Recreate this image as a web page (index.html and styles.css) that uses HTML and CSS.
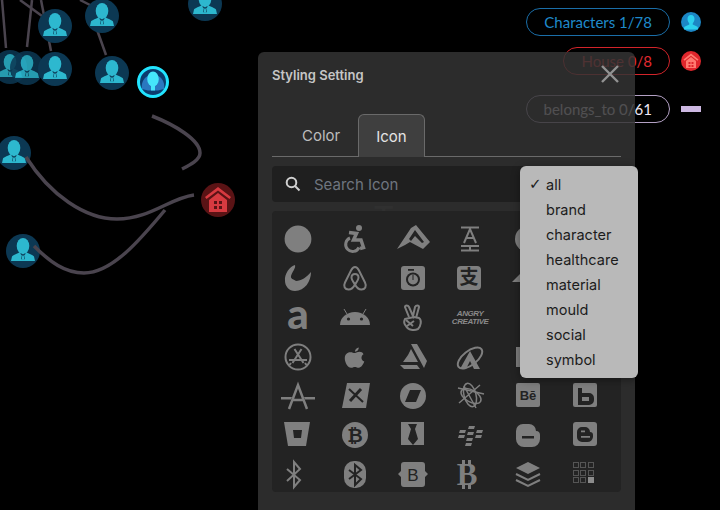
FILE: index.html
```html
<!DOCTYPE html>
<html lang="en">
<head>
  <meta charset="UTF-8">
  <title>Styling Setting</title>
  <link rel="stylesheet" href="styles.css">
</head>
<body>

  <!-- graph canvas -->
  <svg class="graph" width="720" height="510" viewBox="0 0 720 510">
    <defs>
      <g id="person">
        <circle r="17" class="node-bg"/>
        <ellipse cy="-5" rx="6.300" ry="8" class="node-fg"/>
        <path class="node-fg" d="M-12 10l1-4.500c.5-1.200 6-3 8-4.500h6c2 1.500 7.500 3.300 8 4.500l1 4.500z"/>
        <path class="node-bg-line" d="M-3 2.500l1.800 1.800-.6 4h3.600l-.6-4L3 2.500h-1.500L0 3.500-1.500 2.500z"/>
        <path class="node-fg" d="M-.8 4.500h1.600l.4 4h-2.400z"/>
      </g>
    </defs>

    <g class="edge-thin">
      <path d="M2 0L6 48"/>
      <path d="M32 0L27 47"/>
      <path d="M41 0L51 51"/>
      <path d="M20 0L42 16"/>
      <path d="M80 0L92 6"/>
      <path d="M90 10L106 55"/>
    </g>

    <use href="#person" x="55" y="26"/>
    <use href="#person" x="102" y="16"/>
    <use href="#person" x="205" y="4"/>
    <use href="#person" x="10" y="67" class="faded"/>
    <use href="#person" x="27" y="68" class="faded"/>
    <use href="#person" x="55" y="69"/>
    <use href="#person" x="112" y="73"/>
    <use href="#person" x="14" y="153"/>
    <use href="#person" x="23" y="251"/>

    <g transform="translate(153 82)">
      <circle r="14.500" class="hl-bg"/>
      <path class="hl-wing" d="M-11 7c-1-5 1-10 5-12.500L0 -8l6 2.500c4 2.500 6 7.500 5 12.500l-6 1.500H-5z"/>
      <ellipse cy="-3" rx="5.800" ry="7.500" class="hl-face"/>
      <path class="hl-face" d="M-2 3h4v5.500h-4z"/>
    </g>

    <g class="edge">
      <path d="M152 116C175 125 200 140 200 153C200 160 190 165 182 169"/>
      <path d="M26 157C50 195 85 219 117 219C150 219 170 198 194 195"/>
      <path d="M34 246C50 262 65 273 84 273C112 273 140 240 165 210"/>
    </g>

    <g transform="translate(218 200)">
      <circle r="17" class="house-bg"/>
      <path class="house-fg" d="M0 -13L-13 -3l1.500 2L0 -9.500 11.500 -1l1.500 -2zM-9 0v12H9V0L0 -7zM-4 1h3v3h-3zM1 1h3v3H1zM-4 6h3v3h-3zM1 6h3v3H1z" fill-rule="evenodd"/>
    </g>

    <text x="411" y="230" class="ghost-label">Tony</text>
  </svg>

  <!-- legend, top right -->
  <ul class="legend">
    <li class="legend-row">
      <span class="pill pill-blue">Characters 1/78</span>
      <svg class="legend-icon" width="20" height="20" viewBox="-10 -10 20 20">
        <circle r="10" fill="#1c86c4"/>
        <path fill="#2bd0ee" d="M0 -7c-2.500 0-3.500 2-3.500 4 0 1.800 1 3.300 1.800 4.500v1l-4.300 2c-.7.300-1 1.200-1 2v1h14v-1c0-.8-.3-1.700-1-2l-4.300-2v-1c.8-1.200 1.800-2.700 1.800-4.500 0-2-1-4-3.500-4z"/>
      </svg>
    </li>
    <li class="legend-row">
      <span class="pill pill-red">House 0/8</span>
      <svg class="legend-icon" width="20" height="20" viewBox="-10 -10 20 20">
        <circle r="10" fill="#e0262c"/>
        <path fill="#ff7a70" fill-rule="evenodd" d="M0 -7.500L-7.500 -1.500l1 1.200L0 -5.300 6.500 -.3l1 -1.200zM-5 0v7H5V0L0 -4zM-2.500 1h2v2h-2zM.5 1h2v2h-2zM-2.500 4h2v2h-2zM.5 4h2v2h-2z"/>
      </svg>
    </li>
    <li class="legend-row">
      <span class="pill pill-lilac">belongs_to 0/61</span>
      <span class="legend-bar"></span>
    </li>
  </ul>

  <!-- dialog -->
  <div class="modal">
    <h1 class="modal-title">Styling Setting</h1>
    <button class="close" aria-label="Close">
      <svg width="18" height="18" viewBox="0 0 18 18"><path d="M1 1L17 17M17 1L1 17"/></svg>
    </button>

    <div class="tabs">
      <span class="tab">Color</span>
      <span class="tab tab-active">Icon</span>
    </div>

    <div class="search">
      <svg width="16" height="16" viewBox="0 0 16 16"><circle cx="6.500" cy="6.500" r="4.800"/><path d="M10 10L14.500 14.500"/></svg>
      <span class="search-text">Search Icon</span>
    </div>

    <div class="icon-grid">
      <!-- row 1 -->
      <svg viewBox="0 0 28 28"><circle cx="14" cy="14" r="13.400"/></svg>
      <svg viewBox="0 0 28 28"><circle cx="18" cy="3" r="3"/><path class="ln w3-5" d="M8 7.500l7.500 1-3 6.500h7.500l2.500 7.500-3.500 1"/><path class="ln w3" d="M9 13a7 7 0 1 0 9 9.500"/></svg>
      <svg viewBox="0 0 28 28"><path d="M-2 24L12 3l5-3 14 17-7 7-13-7-5 3z"/><path class="cut" d="M10 14l6-9 9 12-2 1-7-7-4 5z"/></svg>
      <svg viewBox="0 0 28 28"><path class="ln w2" d="M5 2.500h18M5 25.500h18M5 21h18M8 18L14 4l6 14M14 21v4"/><path class="ln w2" d="M10 13h8"/></svg>
      <svg viewBox="0 0 28 28"><circle cx="14" cy="14" r="13"/></svg>
      <svg viewBox="0 0 28 28"><rect x="2" y="2" width="24" height="24" rx="3"/></svg>

      <!-- row 2 -->
      <svg viewBox="0 0 28 28"><path d="M1 17C0 10 6 2 11 1c1 3-3 7-4 11-.5 3 2 3 5 5 5 0 11-4 15-9 0 9-6 19-16 19-6 0-10-5-10-10z"/></svg>
      <svg viewBox="0 0 28 28"><path class="ln w2" d="M14 3c-2 0-3 1.500-4 3.500L4 18.500c-2 4 0 7 3.500 7 3 0 5-2 6.500-5 1.500 3 3.500 5 6.500 5 3.500 0 5.500-3 3.500-7L18 6.500C17 4.500 16 3 14 3z"/><path class="ln w2" d="M14 20.500c-2-3-3.500-5-3.500-7 0-2 1.500-3.500 3.500-3.500s3.500 1.500 3.500 3.500c0 2-1.500 4-3.500 7z"/></svg>
      <svg viewBox="0 0 28 28"><rect x="2" y="2" width="24" height="24" rx="3"/><circle class="cut" cx="14" cy="15.500" r="7"/><circle cx="14" cy="15.500" r="5"/><path class="cut" d="M9 5h6v1.800H9zM13.500 11h1v5h-1z"/></svg>
      <svg viewBox="0 0 28 28"><rect x="1" y="2" width="24" height="24" rx="4"/><text x="13" y="20" class="dark-han">支</text></svg>
      <svg viewBox="0 0 28 28"><path d="M6 10l3 8H-2z"/></svg>
      <svg viewBox="0 0 28 28"><circle cx="14" cy="14" r="12"/></svg>

      <!-- row 3 -->
      <svg viewBox="0 0 28 28"><text x="14" y="25" class="glyph-a">a</text></svg>
      <svg viewBox="0 0 28 28"><path d="M-1 21a15 13 0 0 1 30 0z"/><path class="ln w1" d="M6 10L3 5M22 10l3-5"/><circle class="cut" cx="7.500" cy="15" r="1.600"/><circle class="cut" cx="20.500" cy="15" r="1.600"/></svg>
      <svg viewBox="0 0 28 28"><path class="ln w2" d="M10 13L6 3c0-2 3-2 4 0l4 9 2-9c1-2 4-2 4 0l-3 11"/><path class="ln w2" d="M6 15l9-2 5 1c3 2 2 8-1 11-4 2-10 1-12-3-2-2-2-5-1-7z"/><path class="ln w2" d="M7 16l7 6M15 17l-7 5"/></svg>
      <div class="angry"><span>ANGRY</span><span>CREATIVE</span></div>
      <svg viewBox="0 0 28 28"><path d="M6 6h6l3 16H6z"/></svg>
      <svg viewBox="0 0 28 28"><circle cx="14" cy="14" r="12"/></svg>

      <!-- row 4 -->
      <svg viewBox="0 0 28 28"><circle class="ln w2" cx="14" cy="14" r="12.500"/><path class="ln w2" d="M10.500 6l9 14M17.500 6l-9 14M5 17h18M21 20l1.500 2M7 20l-1.500 2"/></svg>
      <svg viewBox="0 0 28 28"><g transform="translate(3 3) scale(.78)"><path d="M19 2c0 3-2 5-5 5.500C14 5 16 2.500 19 2zM14 9c2 0 3-1.500 6-1.500 2 0 4 1 5 3-4 2.500-3 8 1 9.500-1 3-4 8-7 8-2 0-3-1-5-1s-3 1-5 1C5 28 1 21 1 16 1 11 4 8 8 8c3 0 4 1 6 1z"/></g></svg>
      <svg viewBox="0 0 28 28"><path d="M12 1h6l10 17-3 7zM9 12l3-6 7 13H4zM1 22h17l3 4H5z"/></svg>
      <svg viewBox="0 0 28 28"><ellipse class="ln w2" cx="14" cy="15" rx="14.500" ry="7" transform="rotate(-38 14 15)"/><path d="M14 8l10 18h-6l-4-8-4 8H4z"/></svg>
      <svg viewBox="0 0 28 28"><path d="M2 4h12v20H2z"/></svg>
      <svg viewBox="0 0 28 28"><circle cx="14" cy="14" r="12"/></svg>

      <!-- row 5 -->
      <svg viewBox="0 0 28 28"><path class="ln w2-5" d="M5 27L14 3l9 24M9 18h10"/><path d="M-3 15h11l-1 2.500H-3zM20 15h11v2.500H21z"/></svg>
      <svg viewBox="0 0 28 28"><path d="M6 1h23l-4 25H1z"/><path class="ln w2 cut-stroke" d="M8 7l14 13"/><path class="ln w3 cut-stroke" d="M20 7L9 19"/></svg>
      <svg viewBox="0 0 28 28"><circle cx="14" cy="14" r="13"/><path class="cut" d="M11 8h11l-5 12H6z"/></svg>
      <svg viewBox="0 0 28 28"><g class="ln w1-5"><ellipse cx="15" cy="14" rx="11" ry="6" transform="rotate(30 15 14)"/><ellipse cx="14" cy="13" rx="6" ry="12" transform="rotate(-15 14 13)"/><path d="M2 6l26 6M8 4l12 22M3 21L24 3"/></g></svg>
      <svg viewBox="0 0 28 28"><rect x="2" y="1" width="24" height="24" rx="2"/><text x="14" y="18" class="dark-be">Bē</text></svg>
      <svg viewBox="0 0 28 28"><rect x="2" y="1" width="24" height="24" rx="2"/><path class="cut" d="M7 6h4v5h7a5 5 0 0 1 5 5v2a5 5 0 0 1-5 5H7zM11 15v4h7v-4z" fill-rule="evenodd"/></svg>

      <!-- row 6 -->
      <svg viewBox="0 0 28 28"><path d="M0 1h26l-4 24H4z"/><path class="cut" d="M9 9h9l-1 8H10z"/></svg>
      <svg viewBox="0 0 28 28"><circle cx="14" cy="14" r="13"/><text x="14" y="21" class="dark-btc">₿</text></svg>
      <svg viewBox="0 0 28 28"><rect x="2" y="1" width="23" height="23"/><path class="cut" d="M9 3h9l-2 5 3 10-5 6-5-6 3-10z"/></svg>
      <svg viewBox="0 0 28 28"><path d="M4 9h6l-1 3H3zM13 5h6l-1 3h-6zM3 14h6l-1 3H2zM12 11h6l-1 3h-6zM21 9h6l-1 3h-6zM11 17h6l-1 3h-6zM20 14h6l-1 3h-6zM10 22h6l-1 3H9z"/></svg>
      <svg viewBox="0 0 28 28"><path d="M9 3h6a7 7 0 0 1 7 7c3 0 4 2 4 4v4a8 8 0 0 1-8 8H10a8 8 0 0 1-8-8V10a7 7 0 0 1 7-7z"/><path class="cut" d="M8 15h12v2.500H8z"/></svg>
      <svg viewBox="0 0 28 28"><rect x="2" y="1" width="24" height="24" rx="3"/><path class="cut" d="M11 6h3a5 5 0 0 1 5 5c2 0 3 1 3 3v2a6 6 0 0 1-6 5h-5a5 5 0 0 1-5-5v-5a5 5 0 0 1 5-5z"/><path d="M10 9.500h4v1.800h-4zM10 15h9v1.800h-9z"/></svg>

      <!-- row 7 -->
      <svg viewBox="0 0 28 28"><path class="ln w2" d="M3 8l13 11-6 7V1l6 7L3 20"/></svg>
      <svg viewBox="0 0 28 28"><rect x="3" y="0" width="22" height="27" rx="10"/><path class="ln w2 cut-stroke" d="M8 9l12 9-6 6V4l6 5-12 9"/></svg>
      <svg viewBox="0 0 28 28"><path d="M5 1h18c2 0 3 1 3 3v6l3 3-3 3v7c0 2-1 3-3 3H5c-2 0-3-1-3-3v-7l-3-3 3-3V4c0-2 1-3 3-3z"/><text x="14" y="20" class="dark-b">B</text></svg>
      <svg viewBox="0 0 28 28"><text x="11" y="24" class="glyph-b">B</text><path d="M6 -1h3v5H6zM12 -1h3v5h-3zM6 23h3v5H6zM12 23h3v5h-3z"/></svg>
      <svg viewBox="0 0 28 28"><path d="M14 1l12 6-12 6L2 7z"/><path class="ln w2" d="M2 13l12 6 12-6M2 19l12 6 12-6"/></svg>
      <div class="squares">
        <i></i><i></i><i></i><i></i><i></i><i></i><i></i><i></i><i class="on"></i>
      </div>
    </div>

    <ul class="menu">
      <li class="menu-item selected">all</li>
      <li class="menu-item">brand</li>
      <li class="menu-item">character</li>
      <li class="menu-item">healthcare</li>
      <li class="menu-item">material</li>
      <li class="menu-item">mould</li>
      <li class="menu-item">social</li>
      <li class="menu-item">symbol</li>
    </ul>
  </div>

</body>
</html>
```

FILE: styles.css
```css
html, body {
  margin: 0;
  width: 720px;
  height: 510px;
  overflow: hidden;
  background: #000;
  font-family: Inter, "Liberation Sans", sans-serif;
}

/* graph */
.graph {
  position: absolute;
  left: 0;
  top: 0;
}
.node-bg {
  fill: #0c3853;
}
.node-bg-line {
  fill: #0c3853;
}
.node-fg {
  fill: #2db8cf;
}
.faded {
  opacity: 0.85;
}
.edge {
  fill: none;
  stroke: #4a444e;
  stroke-width: 3.5;
}
.edge-thin {
  fill: none;
  stroke: #4a444e;
  stroke-width: 2.5;
}
.hl-bg {
  fill: #0b3c6e;
  stroke: #22e4ff;
  stroke-width: 3;
}
.hl-wing {
  fill: #2a78c0;
}
.hl-face {
  fill: #45e6fb;
}
.house-bg {
  fill: #5a1315;
}
.house-fg {
  fill: #d63a40;
}
.ghost-label {
  fill: #fff;
  font-size: 33px;
  font-family: Inter, sans-serif;
  text-anchor: middle;
  opacity: 0.12;
}

/* legend */
.legend {
  position: absolute;
  right: 19px;
  top: 8px;
  margin: 0;
  padding: 0;
  list-style: none;
  display: flex;
  flex-direction: column;
  align-items: flex-end;
  font-family: Lato, sans-serif;
}
.legend-row {
  display: flex;
  align-items: center;
  gap: 11px;
  height: 28px;
  margin-bottom: 11px;
}
.legend-row:nth-child(2) {
  margin-bottom: 20px;
}
.pill {
  display: block;
  height: 28px;
  line-height: 26px;
  padding: 0 17px;
  box-sizing: border-box;
  border: 1.5px solid;
  border-radius: 14px;
  font-size: 15px;
  white-space: nowrap;
}
.pill-blue {
  border-color: #1a6ea8;
  color: #1f8acb;
}
.pill-red {
  border-color: #d3242a;
  color: #e02a30;
}
.pill-lilac {
  border-color: #b3a0c4;
  color: #efe8f5;
}
.legend-icon {
  display: block;
}
.legend-bar {
  display: block;
  width: 20px;
  height: 6px;
  background: #cdb8e2;
}

/* dialog */
.modal {
  position: absolute;
  left: 258px;
  top: 52px;
  width: 377px;
  height: 458px;
  box-sizing: border-box;
  padding: 16px 14px 0;
  background: rgba(52, 52, 52, 0.85);
  border-radius: 6px 6px 0 0;
}
.modal-title {
  margin: 0;
  font-size: 13px;
  line-height: 14px;
  font-weight: 600;
  color: #c6c6c6;
}
.close {
  position: absolute;
  right: 16px;
  top: 13px;
  padding: 0;
  border: 0;
  background: none;
  line-height: 0;
}
.close path {
  fill: none;
  stroke: #929292;
  stroke-width: 2.4;
}

.tabs {
  display: flex;
  margin-top: 32px;
  height: 42px;
  box-sizing: content-box;
  border-bottom: 1px solid #6a6a6a;
  width: 349px;
}
.tab {
  box-sizing: border-box;
  height: 43px;
  padding: 0 16px 0 30px;
  width: 86px;
  line-height: 44px;
  font-size: 15px;
  color: #bdbdbd;
}
.tab-active {
  width: 67px;
  padding: 0;
  text-align: center;
  background: #3f3f3f;
  color: #e4e4e4;
  border: 1px solid #6a6a6a;
  border-bottom: 0;
  border-radius: 6px 6px 0 0;
}

.search {
  display: flex;
  align-items: center;
  gap: 13px;
  box-sizing: border-box;
  width: 349px;
  height: 36px;
  margin-top: 9px;
  padding-left: 13px;
  background: #1f1f1f;
  border-radius: 4px;
}
.search circle, .search path {
  fill: none;
  stroke: #d0d0d0;
  stroke-width: 2;
}
.search-text {
  font-size: 15px;
  color: #6f7680;
}

.icon-grid {
  display: grid;
  grid-template-columns: repeat(6, 28px);
  grid-auto-rows: 28px;
  column-gap: 29.4px;
  row-gap: 11.3px;
  box-sizing: border-box;
  width: 349px;
  height: 281px;
  margin-top: 9px;
  padding: 14px 0 0 12px;
  background: #232323;
  border-radius: 4px;
}
.icon-grid svg {
  display: block;
  width: 28px;
  height: 28px;
  overflow: visible;
  fill: #7f7f7f;
}
.cut {
  fill: #232323;
}
.ln {
  fill: none;
  stroke: #7f7f7f;
}
.cut-stroke {
  stroke: #232323;
}
.w1 { stroke-width: 1; }
.w1-5 { stroke-width: 1.5; }
.w2 { stroke-width: 2; }
.w2-5 { stroke-width: 2.5; }
.w3 { stroke-width: 3; }
.w3-5 { stroke-width: 3.5; }

.glyph-a {
  font: 900 42px Lato, sans-serif;
  text-anchor: middle;
  fill: #7f7f7f;
}
.glyph-b {
  font: 700 31px "Liberation Serif", serif;
  text-anchor: middle;
  fill: #7f7f7f;
}
.dark-han {
  font: 700 19px "Noto Sans CJK SC", sans-serif;
  text-anchor: middle;
  fill: #232323;
}
.dark-be {
  font: 700 13px "Liberation Sans", sans-serif;
  text-anchor: middle;
  fill: #232323;
}
.dark-btc {
  font: 700 19px "DejaVu Sans", sans-serif;
  text-anchor: middle;
  fill: #232323;
}
.dark-b {
  font: 400 17px "Liberation Sans", sans-serif;
  text-anchor: middle;
  fill: #232323;
}
.angry {
  display: flex;
  flex-direction: column;
  align-items: center;
  font: italic 700 8px/8px "Liberation Sans", sans-serif;
  letter-spacing: -0.4px;
  color: #8a8a8a;
  padding-top: 6px;
  white-space: nowrap;
}
.squares {
  display: grid;
  grid-template-columns: repeat(3, 6px);
  grid-auto-rows: 6px;
  gap: 1.5px;
  padding: 1.500px 0 0 2px;
}
.squares i {
  display: block;
  box-sizing: border-box;
  border: 1px solid #555;
}
.squares .on {
  background: #8c8c8c;
  border-color: #8c8c8c;
}

/* dropdown */
.menu {
  position: absolute;
  left: 262px;
  top: 114px;
  width: 118px;
  margin: 0;
  padding: 6px 0;
  list-style: none;
  background: #b9b9b9;
  border-radius: 6px;
  box-shadow: 0 2px 8px rgba(0, 0, 0, 0.4);
}
.menu-item {
  height: 25px;
  line-height: 25px;
  padding-left: 26px;
  font-size: 14.5px;
  color: #1c1c1c;
  position: relative;
}
.selected::before {
  content: "✓";
  position: absolute;
  left: 9px;
  font-family: "DejaVu Sans", sans-serif;
  font-size: 15px;
  font-weight: 700;
}
```
